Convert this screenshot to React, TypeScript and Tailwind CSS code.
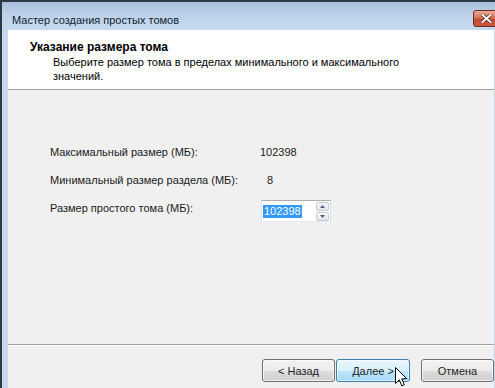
import React from 'react';

function WinButton({ label, hot }: { label: string; hot?: boolean }) {
  return (
    <div
      className={
        hot
          ? 'w-[74px] h-[23px] flex items-center justify-center rounded-[3px] border border-[#3c7fb1] bg-[linear-gradient(#eaf6fd_0%,#d9f0fc_50%,#bee6fd_51%,#a7d9f5_100%)] shadow-[inset_0_0_0_1px_rgba(255,255,255,0.6)] text-[#1e1e1e]'
          : 'w-[73px] h-[23px] flex items-center justify-center rounded-[3px] border border-[#707070] bg-[linear-gradient(#f2f2f2_0%,#ebebeb_50%,#dddddd_51%,#cfcfcf_100%)] shadow-[inset_0_0_0_1px_rgba(255,255,255,0.7)] text-[#1e1e1e]'
      }
    >
      {label}
    </div>
  );
}

export default function App() {
  return (
    <div
      className="w-[495px] h-[388px] overflow-hidden bg-[#2e3844] pt-[2px] pl-[2px] flex flex-col text-[11px] leading-[16px] text-black whitespace-nowrap relative"
      style={{ fontFamily: '"Liberation Sans", "Noto Sans", sans-serif' }}
    >
      <div className="flex-1 flex flex-col bg-[#c4d8ee]">
        {/* title bar */}
        <div className="h-[28px] shrink-0 flex items-start bg-[linear-gradient(#a6bed9,#bcd1e9_40%,#c6d9ee)]">
          <div className="pl-[10px] pt-[10px] text-[#0f1f30]">Мастер создания простых томов</div>
          <div className="ml-auto mt-[8px] -mr-[6px] w-[28px] h-[17px] shrink-0 rounded-[3px] border border-[#6e2b22] bg-[linear-gradient(#e9a996,#d7725c_45%,#c14a33_55%,#c9583e)] flex items-center pl-[7px]">
            <svg width="11" height="9" viewBox="0 0 11 9">
              <path d="M1.5 1 L9.5 8 M9.5 1 L1.5 8" stroke="#5a2118" strokeWidth="3.4" strokeLinecap="square" />
              <path d="M1.5 1 L9.5 8 M9.5 1 L1.5 8" stroke="#ffffff" strokeWidth="2" strokeLinecap="square" />
            </svg>
          </div>
        </div>

        {/* client */}
        <div className="flex-1 flex flex-col ml-[6px] mr-[1px] bg-[#f0f0f0]">
          <div className="h-[60px] shrink-0 bg-white pl-[22px] pt-[9px] border-b border-[#a0a0a0]">
            <div className="font-bold text-[12px]">Указание размера тома</div>
            <div className="pl-[23px] leading-[14px]">
              Выберите размер тома в пределах минимального и максимального
              <br />
              значений.
            </div>
          </div>

          <div className="h-[255px] shrink-0 flex flex-col pt-[48px] pl-[42px] text-[#1a1a1a] border-b border-[#a0a0a0]">
            <div className="h-[28px] flex items-center">
              <div className="w-[210px]">Максимальный размер (МБ):</div>
              <div>102398</div>
            </div>
            <div className="h-[28px] flex items-center">
              <div className="w-[210px]">Минимальный размер раздела (МБ):</div>
              <div className="pl-[7px]">8</div>
            </div>
            <div className="h-[28px] flex items-center">
              <div className="w-[211px]">Размер простого тома (МБ):</div>
              <div className="mt-[6px] w-[70px] h-[22px] flex items-center border border-[#abadb3] border-r-[#dbdfe6] border-b-[#e3e9ef] border-l-[#e2e3ea] bg-white pl-[1px] pr-[1px]">
                <span className="bg-[#3399ff] text-white px-[1px] leading-[13px]">102398</span>
                <div className="ml-auto flex flex-col gap-[1px]">
                  <div className="w-[13px] h-[9px] border border-[#c5cbd3] rounded-[2px] bg-[linear-gradient(#f7f7f7,#e4e4e4)] flex items-center justify-center">
                    <svg width="5" height="3" viewBox="0 0 5 3"><path d="M0 3 L2.5 0 L5 3 Z" fill="#4d6185" /></svg>
                  </div>
                  <div className="w-[13px] h-[9px] border border-[#c5cbd3] rounded-[2px] bg-[linear-gradient(#f7f7f7,#e4e4e4)] flex items-center justify-center">
                    <svg width="5" height="3" viewBox="0 0 5 3"><path d="M0 0 L2.5 3 L5 0 Z" fill="#4d6185" /></svg>
                  </div>
                </div>
              </div>
            </div>
          </div>

          <div className="flex-1 border-t border-white pt-[13px] pl-[254px] flex items-start">
            <WinButton label="< Назад" />
            <div className="ml-[1px]">
              <WinButton label="Далее >" hot />
            </div>
            <div className="ml-[11px]">
              <WinButton label="Отмена" />
            </div>
          </div>
        </div>
      </div>

      {/* mouse cursor */}
      <svg className="absolute left-[395px] top-[367px]" width="13" height="21" viewBox="0 0 13 21">
        <path
          d="M0.5 0.5 L0.5 16.5 L4.3 12.8 L6.8 18.8 L9.3 17.8 L6.8 11.8 L11.8 11.8 Z"
          fill="#ffffff"
          stroke="#000000"
          strokeWidth="1"
          strokeLinejoin="miter"
        />
      </svg>
    </div>
  );
}
